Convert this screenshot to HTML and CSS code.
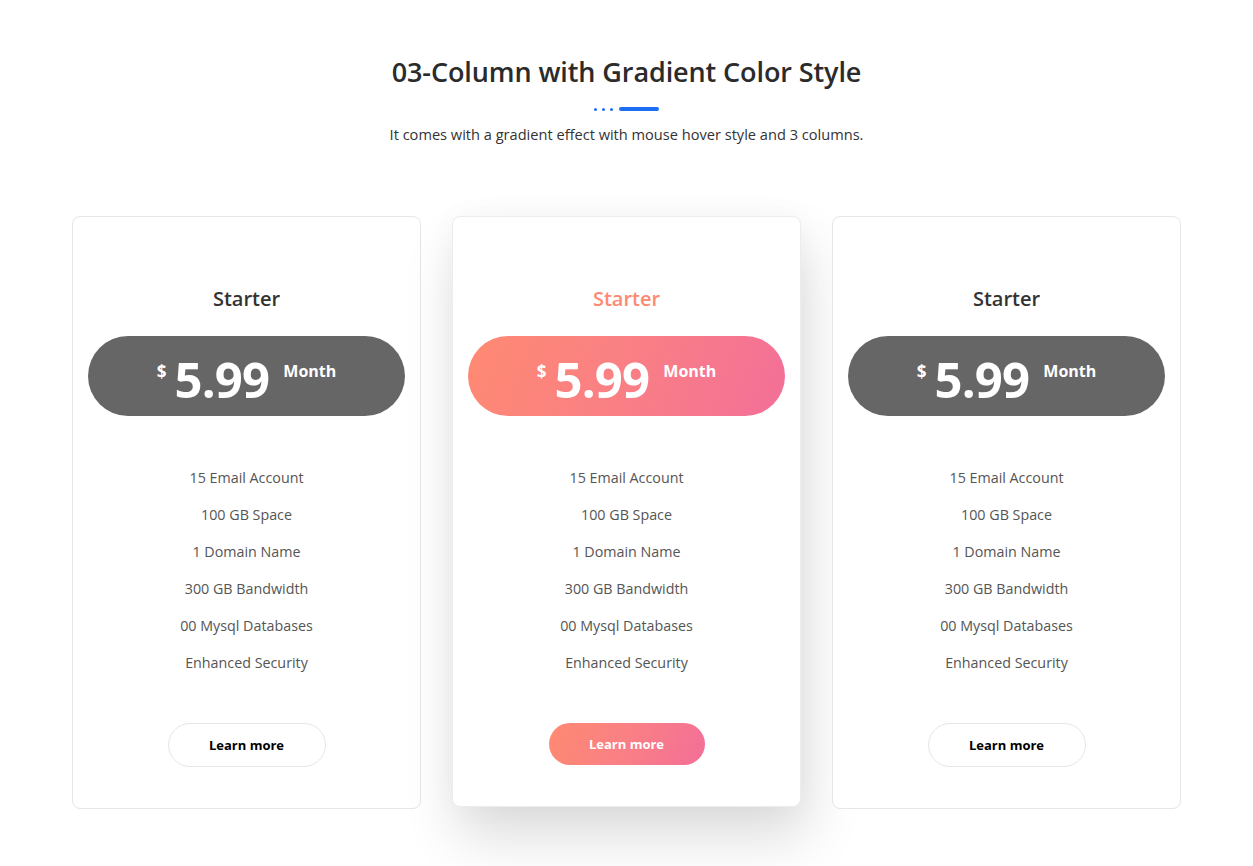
FILE: index.html
```html
<!DOCTYPE html>
<html lang="en">
<head>
<meta charset="utf-8">
<title>Pricing</title>
<link rel="stylesheet" href="styles.css">
</head>
<body>
<section class="pricing">
  <header class="heading">
    <h2 class="title">03-Column with Gradient Color Style</h2>
    <div class="divider"><span class="dot"></span><span class="dot"></span><span class="dot"></span><span class="bar"></span></div>
    <p class="subtitle">It comes with a gradient effect with mouse hover style and 3 columns.</p>
  </header>
  <div class="cards">
    <div class="card">
      <h3 class="plan">Starter</h3>
      <div class="price"><span class="cur">$</span><span class="amount">5.99</span><span class="per">Month</span></div>
      <ul class="features">
        <li>15 Email Account</li>
        <li>100 GB Space</li>
        <li>1 Domain Name</li>
        <li>300 GB Bandwidth</li>
        <li>00 Mysql Databases</li>
        <li>Enhanced Security</li>
      </ul>
      <a class="btn" href="#">Learn more</a>
    </div>
    <div class="card active">
      <h3 class="plan">Starter</h3>
      <div class="price"><span class="cur">$</span><span class="amount">5.99</span><span class="per">Month</span></div>
      <ul class="features">
        <li>15 Email Account</li>
        <li>100 GB Space</li>
        <li>1 Domain Name</li>
        <li>300 GB Bandwidth</li>
        <li>00 Mysql Databases</li>
        <li>Enhanced Security</li>
      </ul>
      <a class="btn" href="#">Learn more</a>
    </div>
    <div class="card">
      <h3 class="plan">Starter</h3>
      <div class="price"><span class="cur">$</span><span class="amount">5.99</span><span class="per">Month</span></div>
      <ul class="features">
        <li>15 Email Account</li>
        <li>100 GB Space</li>
        <li>1 Domain Name</li>
        <li>300 GB Bandwidth</li>
        <li>00 Mysql Databases</li>
        <li>Enhanced Security</li>
      </ul>
      <a class="btn" href="#">Learn more</a>
    </div>
  </div>
</section>
</body>
</html>
```
FILE: styles.css
```css
* { box-sizing: border-box; }
html, body { margin: 0; padding: 0; background: #fff; }
body { font-family: "Open Sans", "Noto Sans", sans-serif; color: #333; min-height: 866px; }

.pricing { width: 1109px; margin: 0 0 0 72px; padding-top: 52px; }

.heading { text-align: center; }
.title { margin: 0; font-size: 27px; font-weight: 600; color: #2b2b2b; line-height: 40px; letter-spacing: -0.1px; }
.divider { display: flex; justify-content: center; align-items: center; gap: 5px; margin-top: 15px; height: 4px; }
.dot { width: 3px; height: 3px; border-radius: 50%; background: #1d6ff2; }
.bar { width: 40px; height: 4px; border-radius: 2px; background: #1d6ff2; margin-left: 1px; }
.subtitle { margin: 13px 0 0; font-size: 14.6px; color: #333; line-height: 20px; }

.cards { display: flex; gap: 31px; margin-top: 72px; align-items: flex-start; }
.card {
  width: 349px; height: 593px;
  border: 1px solid #e6e6e6; border-radius: 8px;
  padding: 67px 15px 0;
  display: flex; flex-direction: column; align-items: center;
  background: #fff;
}
.card.active { height: 591px; box-shadow: 6px 30px 55px rgba(0,0,0,0.14), 0 0 30px rgba(0,0,0,0.03); border-color: #ececec; }

.plan { margin: 0; font-size: 20px; font-weight: 600; color: #333; line-height: 30px; }
.active .plan { color: #fd8a72; }

.price {
  margin-top: 22px; width: 317px; height: 80px; border-radius: 40px;
  background: #666;
  display: flex; justify-content: center; align-items: center;
  color: #fff; font-weight: 700;
}
.active .price { background: linear-gradient(110deg, #ff8a72 0%, #f97f85 50%, #f36f98 100%); }
.cur { font-size: 17px; align-self: flex-start; margin-top: 24px; margin-right: 8px; }
.amount { font-size: 49px; line-height: 1; margin-top: 6px; letter-spacing: -0.8px; }
.per { font-size: 16px; align-self: flex-start; margin-top: 24px; margin-left: 14px; }

.features { list-style: none; margin: 43px 0 0; padding: 0; text-align: center; }
.features li { font-size: 14.3px; color: #555; line-height: 37px; }

.btn {
  margin-top: 42px; width: 158px; height: 44px; border-radius: 22px;
  border: 1px solid #e6e6e6; display: flex; align-items: center; justify-content: center;
  font-size: 13px; font-weight: 700; color: #000; text-decoration: none;
}
.active .btn {
  width: 156px; height: 42px; border: none; color: #fff;
  background: linear-gradient(110deg, #ff8a72 0%, #f97f85 50%, #f36f98 100%);
}
```
